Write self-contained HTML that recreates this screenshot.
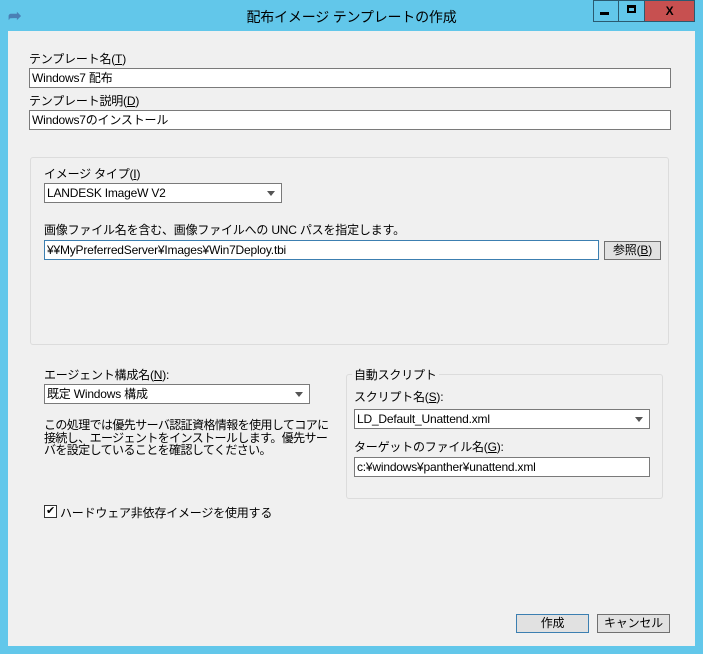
<!DOCTYPE html>
<html><head><meta charset="utf-8"><style>
*{box-sizing:border-box;margin:0;padding:0}
body{width:703px;height:654px;background:#62c7ea;position:relative;overflow:hidden;font-family:"Liberation Sans","Noto Sans CJK JP",sans-serif;font-size:12px;color:#000;letter-spacing:-0.2px}
.a{position:absolute}
.client{left:8px;top:31px;width:687px;height:615px;background:#f0f0f0}
.in{background:#fff;border:1px solid #7a7a7a;height:20px;line-height:18px;padding-left:2px;white-space:nowrap}
.sel::after{content:"";position:absolute;right:6px;top:7px;border:4px solid transparent;border-top:5px solid #555}
.btn{background:#e1e1e1;border:1px solid #adadad;text-align:center;line-height:16px}
.grp{border:1px solid #dcdcdc;border-radius:3px}
u{text-decoration:underline}
</style></head><body>
<div class="a" style="left:8px;top:6px;color:#4a7fb5;font-size:16px;font-weight:bold">➦</div>
<div class="a" style="left:0;width:703px;top:7px;text-align:center;font-size:14px">配布イメージ テンプレートの作成</div>
<div class="a" style="left:593px;top:0;width:102px;height:22px;border:1px solid #2a5a70;background:#62c7ea"></div>
<div class="a" style="left:618px;top:0;width:1px;height:22px;background:#2a5a70"></div>
<div class="a" style="left:644px;top:0;width:51px;height:22px;background:#c75050;border:1px solid #2a5a70;color:#000;font-weight:bold;text-align:center;line-height:20px">X</div>
<div class="a" style="left:600px;top:12px;width:9px;height:3px;background:#000"></div>
<div class="a" style="left:627px;top:5px;width:9px;height:8px;border:2px solid #000;border-top-width:3px"></div>
<div class="a client"></div>
<div class="a" style="left:29px;top:50px">テンプレート名(<u>T</u>)</div>
<div class="a in" style="left:29px;top:68px;width:642px">Windows7 配布</div>
<div class="a" style="left:29px;top:92px">テンプレート説明(<u>D</u>)</div>
<div class="a in" style="left:29px;top:110px;width:642px">Windows7のインストール</div>
<div class="a grp" style="left:30px;top:157px;width:639px;height:188px"></div>
<div class="a" style="left:44px;top:165px">イメージ タイプ(<u>I</u>)</div>
<div class="a in sel" style="left:44px;top:183px;width:238px">LANDESK ImageW V2</div>
<div class="a" style="left:44px;top:221px">画像ファイル名を含む、画像ファイルへの UNC パスを指定します。</div>
<div class="a in" style="left:44px;top:240px;width:555px;border-color:#3c7fb1">¥¥MyPreferredServer¥Images¥Win7Deploy.tbi</div>
<div class="a btn" style="left:604px;top:241px;width:57px;height:19px;border-color:#707070">参照(<u>B</u>)</div>
<div class="a" style="left:44px;top:366px">エージェント構成名(<u>N</u>):</div>
<div class="a in sel" style="left:44px;top:384px;width:266px">既定 Windows 構成</div>
<div class="a" style="left:44px;top:419px;line-height:12.5px;width:285px;letter-spacing:-0.6px">この処理では優先サーバ認証資格情報を使用してコアに接続し、エージェントをインストールします。優先サーバを設定していることを確認してください。</div>
<div class="a grp" style="left:346px;top:374px;width:317px;height:125px"></div>
<div class="a" style="left:352px;top:366px;background:#f0f0f0;padding:0 2px">自動スクリプト</div>
<div class="a" style="left:354px;top:388px">スクリプト名(<u>S</u>):</div>
<div class="a in sel" style="left:354px;top:409px;width:296px">LD_Default_Unattend.xml</div>
<div class="a" style="left:354px;top:438px">ターゲットのファイル名(<u>G</u>):</div>
<div class="a in" style="left:354px;top:457px;width:296px">c:¥windows¥panther¥unattend.xml</div>
<div class="a" style="left:44px;top:505px;width:13px;height:13px;border:1px solid #333;background:#fff;font-size:11px;line-height:11px;text-align:center">✔</div>
<div class="a" style="left:60px;top:504px">ハードウェア非依存イメージを使用する</div>
<div class="a btn" style="left:516px;top:614px;width:73px;height:19px;border-color:#3c7fb1">作成</div>
<div class="a btn" style="left:597px;top:614px;width:73px;height:19px;border-color:#707070">キャンセル</div>
</body></html>
